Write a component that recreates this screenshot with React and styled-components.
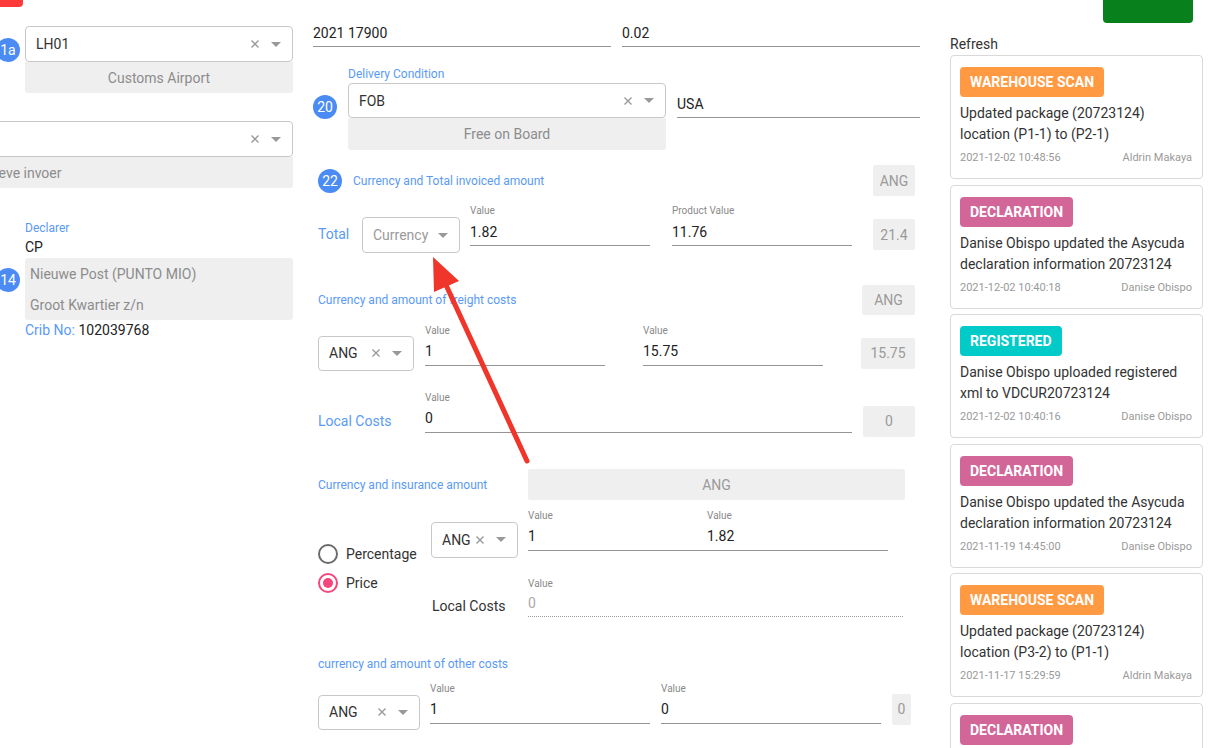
import React from "react";
import styled, { createGlobalStyle } from "styled-components";

const Global = createGlobalStyle`
  html, body { margin: 0; padding: 0; background: #fff; }
  body { font-family: Roboto, "Noto Sans", Arial, sans-serif; color: #333; }
  * { box-sizing: border-box; }
`;

const BLUE = "#5a9af7";
const BADGE_BLUE = "#4b8bf4";

const Page = styled.div`
  position: relative;
  display: flex;
  align-items: flex-start;
  width: 1213px;
  height: 748px;
  overflow: hidden;
  background: #fff;
`;

const LeftCol = styled.div`
  flex-shrink: 0;
  width: 413px;
  margin-left: -120px;
  display: flex;
  flex-direction: column;
`;

const MidCol = styled.div`
  flex-shrink: 0;
  width: 607px;
  margin-left: 20px;
  padding-top: 19px;
  display: flex;
  flex-direction: column;
`;

const RightCol = styled.div`
  flex-shrink: 0;
  width: 253px;
  margin-left: 30px;
  display: flex;
  flex-direction: column;
`;

const TopButton = styled.div`
  height: ${(p) => p.$h}px;
  width: ${(p) => p.$w}px;
  margin-left: ${(p) => p.$ml || "0px"};
  margin-right: ${(p) => p.$mr || "0px"};
  background: ${(p) => p.$bg};
  border-radius: 0 0 4px 4px;
  flex-shrink: 0;
`;

const Row = styled.div`
  display: flex;
  align-items: ${(p) => p.$align || "flex-start"};
  margin-top: ${(p) => p.$mt || 0}px;
  padding-left: ${(p) => p.$pl || 0}px;
  padding-right: ${(p) => p.$pr || 0}px;
  gap: ${(p) => p.$gap || 0}px;
  min-height: ${(p) => p.$minh || 0}px;
`;

const NumBadge = styled.div`
  flex-shrink: 0;
  width: 24px;
  height: 24px;
  border-radius: 50%;
  background: ${BADGE_BLUE};
  color: #fff;
  font-size: 14px;
  display: flex;
  align-items: center;
  justify-content: center;
  margin-top: ${(p) => p.$mt || 0}px;
  margin-left: ${(p) => p.$ml || 0}px;
`;

const FieldStack = styled.div`
  display: flex;
  flex-direction: column;
  width: ${(p) => p.$w};
  flex-shrink: 0;
  margin-left: ${(p) => p.$ml || 0}px;
`;

const SelectBox = styled.div`
  display: flex;
  align-items: center;
  width: ${(p) => p.$w || "100%"};
  height: ${(p) => p.$h || 36}px;
  margin-top: ${(p) => p.$mt || 0}px;
  border: 1px solid #c8c8c8;
  border-radius: 4px;
  background: #fff;
  padding: 0 11px 0 10px;
  flex-shrink: 0;
`;

const SelectValue = styled.span`
  flex: 1;
  font-size: 14px;
  color: ${(p) => (p.$placeholder ? "#9a9a9a" : "#333")};
  white-space: nowrap;
  overflow: hidden;
`;

const ClearIcon = styled.svg`
  flex-shrink: 0;
  margin-right: 12px;
`;

const InfoBox = styled.div`
  height: ${(p) => p.$h || 31}px;
  background: #efefef;
  color: #8c8c8c;
  font-size: 14px;
  display: flex;
  align-items: center;
  justify-content: ${(p) => (p.$center ? "center" : "flex-start")};
  padding-left: ${(p) => p.$pl || 0}px;
  border-radius: ${(p) => p.$radius || "0 0 3px 3px"};
  white-space: nowrap;
  overflow: hidden;
`;

const SmallLabel = styled.div`
  font-size: 12px;
  line-height: 14px;
  color: ${BLUE};
  margin-top: ${(p) => p.$mt || 0}px;
  margin-bottom: ${(p) => p.$mb || 0}px;
  white-space: nowrap;
`;

const PlainText = styled.div`
  font-size: 14px;
  line-height: 18px;
  color: #222;
  margin-top: ${(p) => p.$mt || 0}px;
`;

const BlueSpan = styled.span`
  color: ${BLUE};
`;

const RowLabel = styled.div`
  flex-shrink: 0;
  width: ${(p) => p.$w}px;
  font-size: 14px;
  line-height: 18px;
  color: ${(p) => p.$color || BLUE};
  margin-top: ${(p) => p.$mt || 0}px;
  white-space: nowrap;
`;

const LineInput = styled.div`
  display: flex;
  align-items: center;
  height: 28px;
  width: ${(p) => p.$w || "auto"};
  flex: ${(p) => (p.$w ? "0 0 auto" : "1")};
  border-bottom: 1px solid #949494;
  font-size: 14px;
  color: #222;
  margin-top: ${(p) => p.$mt || 0}px;
`;

const Field = styled.div`
  display: flex;
  flex-direction: column;
  width: ${(p) => p.$w};
  flex-shrink: 0;
`;

const FieldLabel = styled.div`
  font-size: 10px;
  line-height: 13px;
  color: #8a8a8a;
  margin-bottom: 1px;
`;

const FieldInput = styled.div`
  height: 28px;
  display: flex;
  align-items: center;
  font-size: 14px;
  color: ${(p) => (p.$muted ? "#aaa" : "#222")};
  border-bottom: 1px ${(p) => (p.$dotted ? "dotted #9a9a9a" : "solid #949494")};
`;

const ReadBox = styled.div`
  flex-shrink: 0;
  width: ${(p) => p.$w}px;
  height: ${(p) => p.$h || 31}px;
  margin-top: ${(p) => p.$mt || 0}px;
  margin-left: ${(p) => p.$ml || "0px"};
  background: #efefef;
  color: #9a9a9a;
  font-size: 14px;
  display: flex;
  align-items: center;
  justify-content: center;
  border-radius: 2px;
`;

const SectionTitle = styled.div`
  font-size: 12px;
  line-height: 14px;
  color: ${BLUE};
  white-space: nowrap;
  width: ${(p) => (p.$w ? `${p.$w}px` : "auto")};
  flex-shrink: 0;
  margin-top: ${(p) => p.$mt || 0}px;
`;

const RadioCol = styled.div`
  width: 113px;
  flex-shrink: 0;
  display: flex;
  flex-direction: column;
  gap: 9px;
  margin-top: 35.5px;
`;

const RadioRow = styled.label`
  display: flex;
  align-items: center;
  gap: 8px;
  font-size: 14px;
  color: #333;
  height: 20px;
`;

const RadioCircle = styled.span`
  width: 20px;
  height: 20px;
  border-radius: 50%;
  border: 2px solid ${(p) => (p.$on ? "#f5457d" : "#6b6b6b")};
  display: flex;
  align-items: center;
  justify-content: center;
  flex-shrink: 0;
  &::after {
    content: "";
    display: ${(p) => (p.$on ? "block" : "none")};
    width: 10px;
    height: 10px;
    border-radius: 50%;
    background: #f5457d;
  }
`;

const InsGrid = styled.div`
  display: grid;
  grid-template-columns: 97px 377px;
  grid-template-rows: 42px 40px;
  row-gap: 26px;
`;

const PairFields = styled.div`
  display: flex;
  width: 360px;
`;

const BottomText = styled.div`
  align-self: end;
  margin-bottom: 1.5px;
  font-size: 14px;
  line-height: 18px;
  color: #333;
  padding-left: 1px;
`;

const HeaderBar = styled.div`
  display: flex;
  justify-content: flex-end;
`;

const RefreshText = styled.div`
  font-size: 14px;
  line-height: 20px;
  color: #333;
  margin-top: 11px;
`;

const CardList = styled.div`
  display: flex;
  flex-direction: column;
  gap: 5.5px;
  margin-top: 1px;
`;

const Card = styled.div`
  height: 124px;
  border: 1px solid #d9d9d9;
  border-radius: 4px;
  padding: 11px 10px 0 9px;
  display: flex;
  flex-direction: column;
  align-items: flex-start;
  flex-shrink: 0;
`;

const Tag = styled.div`
  height: 30px;
  padding: 0 10px;
  border-radius: 4px;
  background: ${(p) => p.$bg};
  color: #fff;
  font-weight: 700;
  font-size: 14px;
  display: flex;
  align-items: center;
  white-space: nowrap;
`;

const CardText = styled.div`
  margin-top: 6px;
  font-size: 14px;
  line-height: 21px;
  color: #333;
  height: 42px;
`;

const CardFoot = styled.div`
  margin-top: 5px;
  width: 100%;
  display: flex;
  justify-content: space-between;
  font-size: 11px;
  line-height: 16px;
  color: #9a9a9a;
`;

const Overlay = styled.svg`
  position: absolute;
  left: 0;
  top: 0;
  pointer-events: none;
`;

const Clear = () => (
  <ClearIcon width="8" height="8" viewBox="0 0 8 8">
    <path d="M0.5 0.5L7.5 7.5M7.5 0.5L0.5 7.5" stroke="#999" strokeWidth="1.4" />
  </ClearIcon>
);

const Caret = () => (
  <svg width="10" height="5" viewBox="0 0 10 5" style={{ flexShrink: 0 }}>
    <polygon points="0,0 10,0 5,5" fill="#999" />
  </svg>
);

const Select = ({ value, placeholder, clear = true, ...rest }) => (
  <SelectBox {...rest}>
    <SelectValue $placeholder={!value}>{value || placeholder}</SelectValue>
    {clear && <Clear />}
    <Caret />
  </SelectBox>
);

const LabeledField = ({ w, label, value, dotted, muted }) => (
  <Field $w={w}>
    <FieldLabel>{label}</FieldLabel>
    <FieldInput $dotted={dotted} $muted={muted}>
      {value}
    </FieldInput>
  </Field>
);

const TAGS = {
  scan: { label: "WAREHOUSE SCAN", bg: "#ff9a42" },
  decl: { label: "DECLARATION", bg: "#d26699" },
  reg: { label: "REGISTERED", bg: "#00cbc9" },
};

const events = [
  { t: "scan", text: ["Updated package (20723124)", "location (P1-1) to (P2-1)"], date: "2021-12-02 10:48:56", who: "Aldrin Makaya" },
  { t: "decl", text: ["Danise Obispo updated the Asycuda", "declaration information 20723124"], date: "2021-12-02 10:40:18", who: "Danise Obispo" },
  { t: "reg", text: ["Danise Obispo uploaded registered", "xml to VDCUR20723124"], date: "2021-12-02 10:40:16", who: "Danise Obispo" },
  { t: "decl", text: ["Danise Obispo updated the Asycuda", "declaration information 20723124"], date: "2021-11-19 14:45:00", who: "Danise Obispo" },
  { t: "scan", text: ["Updated package (20723124)", "location (P3-2) to (P1-1)"], date: "2021-11-17 15:29:59", who: "Aldrin Makaya" },
  { t: "decl", text: ["Danise Obispo updated the Asycuda", "declaration information 20723124"], date: "2021-11-17 15:20:11", who: "Danise Obispo" },
];

export default function App() {
  return (
    <>
      <Global />
      <Page>
        <LeftCol>
          <TopButton $h={7} $w={73} $ml="70px" $bg="#ff3a3a" />
          <Row $mt={19} $gap={5}>
            <NumBadge $ml={116} $mt={12}>1a</NumBadge>
            <FieldStack $w="268px">
              <Select value="LH01" />
              <InfoBox $center>Customs Airport</InfoBox>
            </FieldStack>
          </Row>
          <Row $mt={28}>
            <FieldStack $w="413px">
              <Select value="" placeholder="" />
              <InfoBox $pl={66}>Alternatieve invoer</InfoBox>
            </FieldStack>
          </Row>
          <FieldStack $w="268px" $ml={145}>
            <SmallLabel $mt={33}>Declarer</SmallLabel>
            <PlainText $mt={3}>CP</PlainText>
          </FieldStack>
          <Row $mt={2} $gap={5}>
            <NumBadge $ml={116} $mt={10}>14</NumBadge>
            <FieldStack $w="268px">
              <InfoBox $pl={5} $radius="3px 3px 0 0">Nieuwe Post (PUNTO MIO)</InfoBox>
              <InfoBox $pl={5}>Groot Kwartier z/n</InfoBox>
              <PlainText $mt={1}>
                <BlueSpan>Crib No:</BlueSpan> 102039768
              </PlainText>
            </FieldStack>
          </Row>
        </LeftCol>

        <MidCol>
          <Row $gap={11}>
            <LineInput $w="298px">2021 17900</LineInput>
            <LineInput $w="298px">0.02</LineInput>
          </Row>

          <Row $mt={20} $gap={11}>
            <NumBadge $mt={28}>20</NumBadge>
            <FieldStack $w="318px">
              <SmallLabel $mb={2}>Delivery Condition</SmallLabel>
              <Select value="FOB" $h={35} />
              <InfoBox $center $h={32}>Free on Board</InfoBox>
            </FieldStack>
            <LineInput $mt={23}>USA</LineInput>
          </Row>

          <Row $mt={15} $pl={5} $pr={5} $gap={11} $align="center">
            <NumBadge>22</NumBadge>
            <SectionTitle>Currency and Total invoiced amount</SectionTitle>
            <ReadBox $w={42} $ml="auto">ANG</ReadBox>
          </Row>

          <Row $mt={8} $pl={5}>
            <RowLabel $w={44} $mt={21}>Total</RowLabel>
            <Select placeholder="Currency" clear={false} $w="98px" $mt={13} />
            <Row $gap={22} $pl={10}>
              <LabeledField w="180px" label="Value" value="1.82" />
              <LabeledField w="180px" label="Product Value" value="11.76" />
            </Row>
            <ReadBox $w={42} $mt={15} $ml="21px">21.4</ReadBox>
          </Row>

          <Row $mt={32} $pl={5} $pr={5} $align="center" $minh={30}>
            <SectionTitle>Currency and amount of freight costs</SectionTitle>
            <ReadBox $w={53} $h={30} $ml="auto">ANG</ReadBox>
          </Row>

          <Row $mt={8.5} $pl={5}>
            <Select value="ANG" $w="96px" $h={35} $mt={12} />
            <Row $gap={38} $pl={11}>
              <LabeledField w="180px" label="Value" value="1" />
              <LabeledField w="180px" label="Value" value="15.75" />
            </Row>
            <ReadBox $w={54} $mt={14} $ml="38px">15.75</ReadBox>
          </Row>

          <Row $mt={20} $pl={5}>
            <RowLabel $w={107} $mt={21}>Local Costs</RowLabel>
            <LabeledField w="427px" label="Value" value="0" />
            <ReadBox $w={52} $mt={15} $ml="11px">0</ReadBox>
          </Row>

          <Row $mt={32.5} $pl={5} $align="center">
            <SectionTitle $w={210}>Currency and insurance amount</SectionTitle>
            <ReadBox $w={377}>ANG</ReadBox>
          </Row>

          <Row $mt={8.5} $pl={5}>
            <RadioCol>
              <RadioRow>
                <RadioCircle />
                Percentage
              </RadioRow>
              <RadioRow>
                <RadioCircle $on />
                Price
              </RadioRow>
            </RadioCol>
            <InsGrid>
              <Select value="ANG" $w="87px" $mt={13} />
              <PairFields>
                <LabeledField w="179px" label="Value" value="1" />
                <LabeledField w="181px" label="Value" value="1.82" />
              </PairFields>
              <BottomText>Local Costs</BottomText>
              <LabeledField w="375px" label="Value" value="0" dotted muted />
            </InsGrid>
          </Row>

          <Row $mt={40.5} $pl={5}>
            <SectionTitle>currency and amount of other costs</SectionTitle>
          </Row>

          <Row $mt={10.5} $pl={5}>
            <Select value="ANG" $w="102px" $h={35} $mt={13} />
            <Row $gap={11} $pl={10}>
              <LabeledField w="220px" label="Value" value="1" />
              <LabeledField w="220px" label="Value" value="0" />
            </Row>
            <ReadBox $w={19} $mt={12} $ml="11px">0</ReadBox>
          </Row>
        </MidCol>

        <RightCol>
          <HeaderBar>
            <TopButton $h={23} $w={90} $mr="10px" $bg="#08801c" />
          </HeaderBar>
          <RefreshText>Refresh</RefreshText>
          <CardList>
            {events.map((e, i) => (
              <Card key={i}>
                <Tag $bg={TAGS[e.t].bg}>{TAGS[e.t].label}</Tag>
                <CardText>
                  {e.text[0]}
                  <br />
                  {e.text[1]}
                </CardText>
                <CardFoot>
                  <span>{e.date}</span>
                  <span>{e.who}</span>
                </CardFoot>
              </Card>
            ))}
          </CardList>
        </RightCol>

        <Overlay width="1213" height="748" viewBox="0 0 1213 748">
          <line x1="527" y1="461" x2="446" y2="285" stroke="#f0352a" strokeWidth="5" strokeLinecap="round" />
          <polygon points="433,257 459,281 434,292" fill="#f0352a" />
        </Overlay>
      </Page>
    </>
  );
}
